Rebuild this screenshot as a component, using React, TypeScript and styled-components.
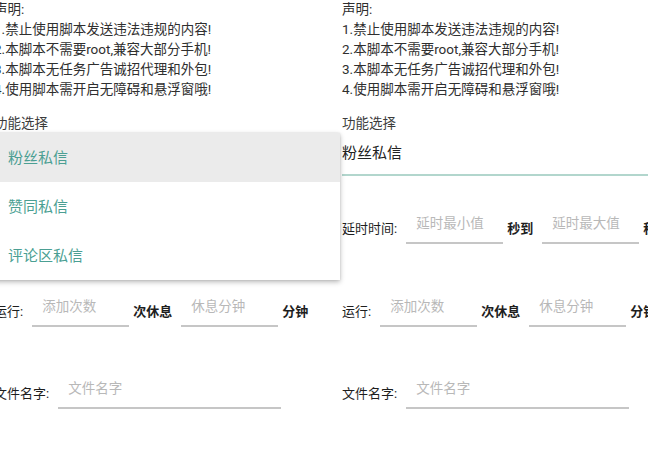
import React from 'react';
import styled, { createGlobalStyle } from 'styled-components';

const Global = createGlobalStyle`
  html, body { margin: 0; padding: 0; background: #fff; }
  body { font-family: Roboto, "Noto Sans CJK SC", sans-serif; }
`;

const Page = styled.div`
  display: flex;
  width: 648px;
  height: 449px;
  overflow: hidden;
  background: #fff;
`;

const Screen = styled.div<{ $shift: number; $raised?: boolean }>`
  flex: 0 0 348px;
  box-sizing: border-box;
  padding: 0 12px;
  margin-left: ${(p) => p.$shift}px;
  position: relative;
  z-index: ${(p) => (p.$raised ? 2 : 1)};
`;

const Notices = styled.div`
  margin-top: -1px;
  font-size: 13.5px;
  line-height: 20px;
  color: #2f2f2f;
  white-space: nowrap;
`;

const SectionTitle = styled.div`
  margin-top: 14px;
  font-size: 13.5px;
  line-height: 20px;
  color: #3c3c3c;
`;

const Select = styled.div`
  position: relative;
  padding: 10px 0 11px;
  border-bottom: 2px solid #b2d6cd;
  font-size: 15px;
  line-height: 20px;
  color: #222;
`;

const SelectValue = styled.span<{ $hidden?: boolean }>`
  visibility: ${(p) => (p.$hidden ? 'hidden' : 'visible')};
`;

const Menu = styled.div`
  position: absolute;
  top: 0;
  left: 0;
  width: 346px;
  background: #fff;
  box-shadow: 0 2px 5px rgba(0, 0, 0, 0.28), 0 0 2px rgba(0, 0, 0, 0.1);
  z-index: 3;
`;

const MenuItem = styled.div<{ $active?: boolean }>`
  height: 49px;
  display: flex;
  align-items: center;
  padding-left: 14px;
  font-size: 15px;
  color: #4b9f93;
  background: ${(p) => (p.$active ? '#ebebeb' : '#fff')};
`;

const FormRow = styled.div<{ $gap: number }>`
  display: flex;
  align-items: flex-end;
  margin-top: ${(p) => p.$gap}px;
  white-space: nowrap;
`;

const Label = styled.span<{ $strong?: boolean }>`
  flex: 0 0 auto;
  padding-bottom: 5px;
  font-size: 13px;
  line-height: 20px;
  color: #1e1e1e;
  font-weight: ${(p) => (p.$strong ? 700 : 400)};
`;

const Field = styled.div<{ $wide?: boolean }>`
  flex: 0 0 auto;
  width: ${(p) => (p.$wide ? 223 : 97)}px;
  box-sizing: border-box;
  margin: 0 4px 0 9px;
  padding: 4px 0 9px 10px;
  border-bottom: 2px solid #c6c6c6;
  font-size: 13.5px;
  line-height: 20px;
  color: #b8b8b8;
`;

const notices = [
  '声明:',
  '1.禁止使用脚本发送违法违规的内容!',
  '2.本脚本不需要root,兼容大部分手机!',
  '3.本脚本无任务广告诚招代理和外包!',
  '4.使用脚本需开启无障碍和悬浮窗哦!',
];

const options = ['粉丝私信', '赞同私信', '评论区私信'];

function Phone({ open }: { open?: boolean }) {
  return (
    <>
      <Notices>
        {notices.map((n) => (
          <div key={n}>{n}</div>
        ))}
      </Notices>
      <SectionTitle>功能选择</SectionTitle>
      <Select>
        <SelectValue $hidden={open}>粉丝私信</SelectValue>
        {open && (
          <Menu>
            {options.map((o, i) => (
              <MenuItem key={o} $active={i === 0}>
                {o}
              </MenuItem>
            ))}
          </Menu>
        )}
      </Select>
      <FormRow $gap={33}>
        <Label>延时时间:</Label>
        <Field>延时最小值</Field>
        <Label $strong>秒到</Label>
        <Field>延时最大值</Field>
        <Label $strong>秒</Label>
      </FormRow>
      <FormRow $gap={48}>
        <Label>运行:</Label>
        <Field>添加次数</Field>
        <Label $strong>次休息</Label>
        <Field>休息分钟</Field>
        <Label $strong>分钟</Label>
      </FormRow>
      <FormRow $gap={47}>
        <Label>文件名字:</Label>
        <Field $wide>文件名字</Field>
      </FormRow>
    </>
  );
}

export default function App() {
  return (
    <>
      <Global />
      <Page>
        <Screen $shift={-18} $raised>
          <Phone open />
        </Screen>
        <Screen $shift={0}>
          <Phone />
        </Screen>
      </Page>
    </>
  );
}
